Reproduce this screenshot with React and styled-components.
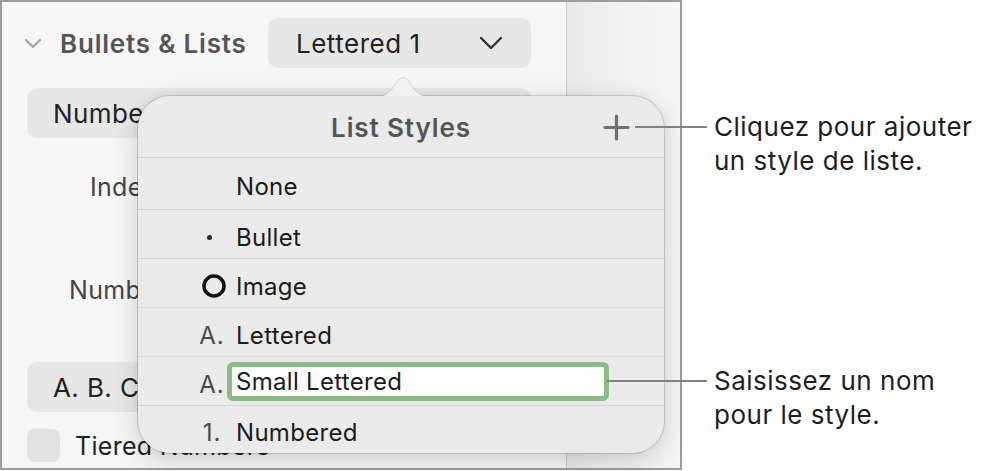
import React from "react";
import styled, { createGlobalStyle } from "styled-components";

const GlobalStyle = createGlobalStyle`
  html, body {
    margin: 0;
    padding: 0;
    background: #fff;
  }
  body {
    font-family: Inter, "Noto Sans", "Liberation Sans", sans-serif;
    -webkit-font-smoothing: antialiased;
  }
`;

const Page = styled.div`
  display: flex;
  width: 984px;
  height: 471px;
  overflow: hidden;
`;

const Frame = styled.div`
  position: relative;
  flex: none;
  width: 682px;
  height: 470px;
  box-sizing: border-box;
  border: 2px solid #9c9c9c;
  display: flex;
`;

const Sidebar = styled.div`
  width: 565px;
  flex: none;
  background: #f6f6f6;
  border-right: 1px solid #cdcdcd;
  display: flex;
  flex-direction: column;
  padding: 16px 35px 0 0;
  box-sizing: border-box;
`;

const Canvas = styled.div`
  flex: 1;
  background: linear-gradient(to right, #e9e9e9, #f3f3f3 60%, #f6f6f6);
`;

const HeaderRow = styled.div`
  display: flex;
  align-items: center;
  height: 50px;
  padding-left: 22px;
`;

const Disclosure = styled.svg`
  width: 18px;
  height: 11px;
  flex: none;
`;

const SectionTitle = styled.div`
  flex: 1;
  margin-left: 18px;
  font-size: 26px;
  font-weight: 600;
  color: #555;
  letter-spacing: 0.8px;
`;

const PopupButton = styled.div`
  width: 263px;
  height: 50px;
  box-sizing: border-box;
  border-radius: 10px;
  background: #e7e7e7;
  display: flex;
  align-items: center;
  justify-content: space-between;
  padding: 0 28px 0 28px;
  font-size: 26px;
  letter-spacing: 0.5px;
  color: #222;
`;

const SelectBar = styled.div`
  margin: ${(p) => p.$top}px 0 0 25px;
  height: 50px;
  border-radius: 10px;
  background: #e7e7e7;
  display: flex;
  align-items: center;
  padding-left: 26px;
  font-size: 26px;
  letter-spacing: 0.4px;
  color: #222;
`;

const FieldRow = styled.div`
  height: ${(p) => p.$height}px;
  box-sizing: border-box;
  padding: ${(p) => p.$top}px 0 0 ${(p) => p.$left}px;
  font-size: 25px;
  line-height: 30px;
  letter-spacing: 0.3px;
  color: #444;
`;

const CheckRow = styled.div`
  display: flex;
  align-items: center;
  margin: 17px 0 0 25px;
  height: 33px;
  gap: 15px;
  font-size: 25px;
  letter-spacing: 0.3px;
  color: #222;
`;

const CheckBox = styled.div`
  width: 33px;
  height: 33px;
  border-radius: 8px;
  background: #e2e2e2;
`;

const Popover = styled.div`
  position: absolute;
  z-index: 1;
  left: 136px;
  top: 94px;
  width: 526px;
  height: 357px;
  border-radius: 32px;
  background: #eaeaea;
  box-shadow: 0 0 0 1px rgba(0, 0, 0, 0.13), 0 8px 28px rgba(0, 0, 0, 0.16),
    0 0 10px rgba(0, 0, 0, 0.06);
  display: flex;
  flex-direction: column;
`;

const PopArrow = styled.svg`
  position: absolute;
  top: -23px;
  left: 235px;
  width: 60px;
  height: 24px;
`;

const PopHeader = styled.div`
  position: relative;
  height: 62px;
  flex: none;
  display: flex;
  align-items: center;
  justify-content: center;
  border-bottom: 1.5px solid #d5d5d5;
  font-size: 26px;
  font-weight: 600;
  letter-spacing: 0.9px;
  color: #555;
  padding-top: 2px;
  box-sizing: border-box;
`;

const AddButton = styled.svg`
  position: absolute;
  right: 34px;
  top: 18px;
  width: 27px;
  height: 27px;
`;

const StyleRow = styled.div`
  height: ${(p) => p.$height}px;
  flex: none;
  box-sizing: border-box;
  display: flex;
  align-items: center;
  padding-top: 6px;
  border-bottom: ${(p) => (p.$last ? "none" : "1.5px solid #d5d5d5")};
  font-size: 24px;
  letter-spacing: 0.3px;
  color: #1b1b1b;
`;

const Marker = styled.div`
  width: 44px;
  margin-left: 52px;
  margin-right: 2px;
  flex: none;
  display: flex;
  justify-content: center;
  align-items: center;
  color: #4a4a4a;
  font-size: 24px;
  letter-spacing: 1px;
`;

const Dot = styled.span`
  width: 5px;
  height: 5px;
  border-radius: 50%;
  background: #2a2a2a;
  margin-right: 6px;
`;

const NameInput = styled.div`
  margin-left: -9px;
  width: 382px;
  height: 39px;
  box-sizing: border-box;
  border: 5px solid #8cbb88;
  border-radius: 6px;
  background: #fff;
  display: flex;
  align-items: center;
  padding-left: 4px;
  margin-top: -6px;
`;

const Annotations = styled.div`
  display: flex;
  flex-direction: column;
`;

const Callout = styled.div`
  position: relative;
  z-index: 2;
  display: flex;
  align-items: flex-start;
  margin-top: ${(p) => p.$top}px;
  margin-left: -${(p) => p.$reach}px;
`;

const Leader = styled.div`
  width: ${(p) => p.$width}px;
  height: 2px;
  background: #808080;
  margin-top: 16px;
  flex: none;
`;

const CalloutText = styled.div`
  margin-left: 7px;
  font-size: 26px;
  line-height: 34px;
  letter-spacing: 0.5px;
  color: #1e1e1e;
  white-space: nowrap;
`;

const styles = [
  { name: "None", marker: null, height: 52 },
  { name: "Bullet", marker: "dot", height: 49 },
  { name: "Image", marker: "circle", height: 49 },
  { name: "Lettered", marker: "A.", height: 49 },
  { name: "Small Lettered", marker: "A.", height: 49, editing: true },
  { name: "Numbered", marker: "1.", height: 47 },
];

function renderMarker(marker) {
  if (marker === "dot") return <Dot />;
  if (marker === "circle")
    return (
      <svg width="28" height="26" viewBox="0 0 28 26">
        <circle cx="16" cy="13" r="10" fill="none" stroke="#111" strokeWidth="3.5" />
      </svg>
    );
  return marker;
}

export default function App() {
  return (
    <>
      <GlobalStyle />
      <Page>
        <Frame>
          <Sidebar>
            <HeaderRow>
              <Disclosure viewBox="0 0 18 11">
                <path d="M2 2 L9 9 L16 2" fill="none" stroke="#a6a6a6" strokeWidth="2.4" strokeLinecap="round" strokeLinejoin="round" />
              </Disclosure>
              <SectionTitle>Bullets &amp; Lists</SectionTitle>
              <PopupButton>
                <span>Lettered 1</span>
                <svg width="24" height="14" viewBox="0 0 24 14">
                  <path d="M2 2 L12 12 L22 2" fill="none" stroke="#333" strokeWidth="2.4" strokeLinecap="round" strokeLinejoin="round" />
                </svg>
              </PopupButton>
            </HeaderRow>
            <SelectBar $top={20}>Numbered</SelectBar>
            <FieldRow $height={100} $top={34} $left={88}>Indent</FieldRow>
            <FieldRow $height={100} $top={37} $left={67}>Number</FieldRow>
            <SelectBar $top={24}>A. B. C</SelectBar>
            <CheckRow>
              <CheckBox />
              <span>Tiered Numbers</span>
            </CheckRow>
          </Sidebar>
          <Canvas />
          <Popover>
            <PopArrow viewBox="0 0 60 24">
              <path d="M0 24 C 12 24, 17 20, 23 10 Q 30 -1, 37 10 C 43 20, 48 24, 60 24 Z" fill="#f1f1f1" stroke="rgba(0,0,0,0.12)" strokeWidth="1" />
              <rect x="0" y="23" width="60" height="2" fill="#ededed" />
            </PopArrow>
            <PopHeader>
              List Styles
              <AddButton viewBox="0 0 27 27">
                <path d="M13.5 2 V25 M2 13.5 H25" stroke="#6f6f6f" strokeWidth="3.2" strokeLinecap="round" />
              </AddButton>
            </PopHeader>
            {styles.map((s, i) => (
              <StyleRow key={s.name} $height={s.height} $last={i === styles.length - 1}>
                <Marker>{renderMarker(s.marker)}</Marker>
                {s.editing ? <NameInput>{s.name}</NameInput> : <span>{s.name}</span>}
              </StyleRow>
            ))}
          </Popover>
        </Frame>
        <Annotations>
          <Callout $top={110} $reach={47}>
            <Leader $width={72} />
            <CalloutText>
              Cliquez pour ajouter
              <br />
              un style de liste.
            </CalloutText>
          </Callout>
          <Callout $top={186} $reach={75}>
            <Leader $width={100} />
            <CalloutText>
              Saisissez un nom
              <br />
              pour le style.
            </CalloutText>
          </Callout>
        </Annotations>
      </Page>
    </>
  );
}
